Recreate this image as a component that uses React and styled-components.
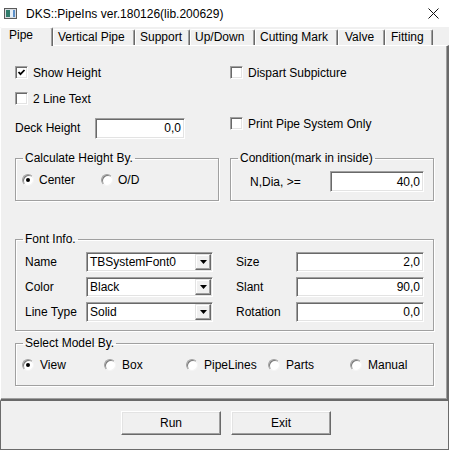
import React from 'react';
import styled, { createGlobalStyle } from 'styled-components';

const GlobalStyle = createGlobalStyle`
  html, body { margin: 0; padding: 0; background: #f0f0f0; }
  body {
    width: 449px; height: 450px; overflow: hidden;
    font-family: "Liberation Sans", Arial, sans-serif; font-size: 12px; color: #000;
  }
  * { box-sizing: border-box; }
`;

const Window = styled.div`
  width: 449px; height: 450px;
  display: flex; flex-direction: column;
  background: #f0f0f0;
`;

const TitleBar = styled.div`
  flex: none; height: 27px; background: #fff;
  display: flex; align-items: center; padding-left: 4px;
`;

const TitleText = styled.span`
  flex: 1; margin-left: 9px; font-size: 12px; line-height: 14px; color: #000;
`;

const CloseBox = styled.div`
  width: 32px; height: 27px; display: flex; align-items: center; justify-content: center;
`;

const TabStrip = styled.div`
  flex: none; height: 19px; display: flex; align-items: flex-end;
  position: relative; z-index: 1; margin-bottom: -1px;
`;

const Tab = styled.div`
  width: ${p => p.$w}px;
  height: ${p => (p.$active ? 19 : 16)}px;
  margin-bottom: ${p => (p.$active ? 0 : 1)}px;
  padding-left: ${p => p.$pad}px;
  background: #f0f0f0;
  border-top: 1px solid #fff;
  border-left: 1px solid #fff;
  border-right: 1px solid #696969;
  box-shadow: inset -1px 0 0 #a0a0a0;
  border-radius: 2px 2px 0 0;
  line-height: 14px; white-space: nowrap; font-size: 12px;
`;

const Panel = styled.div`
  flex: none; height: 356px;
  border-top: 1px solid #fff;
  border-left: 1px solid #fff;
  border-right: 2px solid #696969;
  border-bottom: 2px solid #696969;
  box-shadow: inset -1px -1px 0 #a0a0a0;
  padding: 20px 13px 0 14px;
  display: flex; flex-direction: column;
`;

const TopGrid = styled.div`
  display: grid;
  grid-template-columns: 204px 204px;
  grid-template-rows: 14px 13px 22px;
  column-gap: 11px; row-gap: 12px;
`;

const CheckRow = styled.label`
  display: flex; align-items: center; gap: 5px; height: 13px; line-height: 14px;
  align-self: start; white-space: nowrap;
  grid-column: ${p => p.$col || 'auto'};
  grid-row: ${p => p.$row || 'auto'};
`;

const CheckBox = styled.span`
  width: 13px; height: 13px; flex: none; background: #fff;
  border: 1px solid; border-color: #a0a0a0 #fff #fff #a0a0a0;
  box-shadow: inset 1px 1px 0 #696969, inset -1px -1px 0 #e3e3e3;
  display: flex; align-items: center; justify-content: center;
`;

const FieldRow = styled.div`
  display: flex; align-items: center;
  grid-column: ${p => p.$col || 'auto'};
  grid-row: ${p => p.$row || 'auto'};
`;

const Label = styled.span`
  width: ${p => p.$w}px; flex: none; white-space: nowrap; line-height: 14px;
`;

const TextBox = styled.div`
  width: ${p => p.$w}px; height: ${p => p.$h || 20}px; flex: none;
  background: #fff;
  border: 1px solid; border-color: #a0a0a0 #fff #fff #a0a0a0;
  box-shadow: inset 1px 1px 0 #696969, inset -1px -1px 0 #e3e3e3;
  display: flex; align-items: center; justify-content: flex-end;
  padding-right: 3px; line-height: 14px;
`;

const GroupRow = styled.div`
  display: grid; grid-template-columns: 204px 204px; column-gap: 11px;
  align-items: start; margin-top: 12px;
`;

const Group = styled.fieldset`
  margin: ${p => p.$mt || 0}px 0 0 0;
  padding: 0;
  border: 1px solid #a0a0a0;
  box-shadow: inset 1px 1px 0 #fff, 1px 1px 0 #fff;
  min-width: 0;
`;

const Legend = styled.legend`
  padding: 0 2px; margin-left: 7px; line-height: 14px; font-size: 12px;
`;

const GroupBody = styled.div`
  padding: ${p => p.$pad};
`;

const RadioRow = styled.div`
  display: flex; align-items: center; height: 14px;
`;

const RadioItem = styled.label`
  width: ${p => p.$w}px; flex: none;
  display: flex; align-items: center; gap: ${p => p.$gap || 6}px;
  white-space: nowrap; line-height: 14px;
`;

const RadioCircle = styled.span`
  width: 12px; height: 12px; flex: none; border-radius: 50%;
  background: #fff;
  border: 1px solid; border-color: #a0a0a0 #f4f4f4 #f4f4f4 #a0a0a0;
  box-shadow: inset 1px 1px 0 #7a7a7a;
  display: flex; align-items: center; justify-content: center;
  &::after {
    content: ''; width: 4px; height: 4px; border-radius: 50%;
    background: ${p => (p.$on ? '#000' : 'transparent')};
  }
`;

const FontGrid = styled.div`
  display: flex; gap: 23px;
`;

const FieldGrid = styled.div`
  display: grid;
  grid-template-columns: ${p => p.$label}px ${p => p.$field}px;
  grid-auto-rows: 20px; row-gap: 5px; align-items: center;
`;

const Select = styled.div`
  width: 127px; height: 20px;
  background: #fff;
  border: 1px solid; border-color: #a0a0a0 #fff #fff #a0a0a0;
  box-shadow: inset 1px 1px 0 #696969, inset -1px -1px 0 #e3e3e3;
  display: flex; align-items: center; padding: 1px 1px 1px 3px;
`;

const SelectText = styled.span`
  flex: 1; line-height: 14px; white-space: nowrap;
`;

const DropButton = styled.span`
  width: 16px; height: 16px; flex: none;
  background: #f0f0f0;
  border: 1px solid; border-color: #e3e3e3 #696969 #696969 #e3e3e3;
  box-shadow: inset -1px -1px 0 #a0a0a0, inset 1px 1px 0 #fff;
  display: flex; align-items: center; justify-content: center;
`;

const Footer = styled.div`
  flex: 1;
  border: 1px solid #6b6b6b; border-top: none;
  display: flex; justify-content: center; align-items: flex-start;
  padding: 10px 0 0 3px; gap: 10px;
`;

const Button = styled.button`
  width: 100px; height: 24px;
  font-family: "Liberation Sans", Arial, sans-serif; font-size: 12px; color: #000;
  background: #f0f0f0;
  border: 1px solid; border-color: #fff #696969 #696969 #fff;
  box-shadow: inset -1px -1px 0 #a0a0a0, inset 1px 1px 0 #e3e3e3;
  padding: 0; line-height: 14px;
`;

const AppIcon = () => (
  <svg width="13" height="11" viewBox="0 0 13 11">
    <rect x="0.5" y="0.5" width="12" height="10" fill="#d8dce0" stroke="#5a5a5a" />
    <rect x="2" y="2" width="4" height="7" fill="#2f7a6a" />
    <rect x="6" y="2" width="5" height="7" fill="#e6eef6" />
    <rect x="9" y="2" width="2" height="7" fill="#5b8fc8" />
  </svg>
);

const CloseIcon = () => (
  <svg width="11" height="11" viewBox="0 0 11 11">
    <path d="M0.5 0.5 L10.5 10.5 M10.5 0.5 L0.5 10.5" stroke="#111" strokeWidth="1" />
  </svg>
);

const Check = () => (
  <svg width="9" height="9" viewBox="0 0 9 9">
    <polyline points="1.5,4 3.5,6.2 7.5,2" fill="none" stroke="#000" strokeWidth="1.8" />
  </svg>
);

const Arrow = () => (
  <svg width="7" height="4" viewBox="0 0 7 4">
    <polygon points="0,0 7,0 3.5,4" fill="#000" />
  </svg>
);

const tabs = [
  { t: 'Pipe', w: 53, pad: 8, active: true },
  { t: 'Vertical Pipe', w: 82, pad: 4 },
  { t: 'Support', w: 55, pad: 4 },
  { t: 'Up/Down', w: 65, pad: 4 },
  { t: 'Cutting Mark', w: 83, pad: 4 },
  { t: 'Valve', w: 47, pad: 6 },
  { t: 'Fitting', w: 48, pad: 5 },
];

const Radio = ({ w, gap, on, children }) => (
  <RadioItem $w={w} $gap={gap}>
    <RadioCircle $on={on} />
    {children}
  </RadioItem>
);

const SelectBox = ({ children }) => (
  <Select>
    <SelectText>{children}</SelectText>
    <DropButton><Arrow /></DropButton>
  </Select>
);

export default function App() {
  return (
    <Window>
      <GlobalStyle />
      <TitleBar>
        <AppIcon />
        <TitleText>DKS::PipeIns ver.180126(lib.200629)</TitleText>
        <CloseBox><CloseIcon /></CloseBox>
      </TitleBar>
      <TabStrip>
        {tabs.map(tb => (
          <Tab key={tb.t} $w={tb.w} $pad={tb.pad} $active={tb.active}>{tb.t}</Tab>
        ))}
      </TabStrip>
      <Panel>
        <TopGrid>
          <CheckRow $col="1" $row="1"><CheckBox><Check /></CheckBox>Show Height</CheckRow>
          <CheckRow $col="2" $row="1"><CheckBox />Dispart Subpicture</CheckRow>
          <CheckRow $col="1" $row="2"><CheckBox />2 Line Text</CheckRow>
          <FieldRow $col="1" $row="3">
            <Label $w={80}>Deck Height</Label>
            <TextBox $w={90} $h={21}>0,0</TextBox>
          </FieldRow>
          <CheckRow $col="2" $row="3"><CheckBox />Print Pipe System Only</CheckRow>
        </TopGrid>
        <GroupRow>
          <Group>
            <Legend>Calculate Height By.</Legend>
            <GroupBody $pad="8px 0 13px 6px">
              <RadioRow>
                <Radio w={79} gap={5} on>Center</Radio>
                <Radio w={80} gap={5}>O/D</Radio>
              </RadioRow>
            </GroupBody>
          </Group>
          <Group>
            <Legend>Condition(mark in inside)</Legend>
            <GroupBody $pad="6px 0 8px 19px">
              <FieldRow>
                <Label $w={80}>N,Dia, &gt;=</Label>
                <TextBox $w={94} $h={21}>40,0</TextBox>
              </FieldRow>
            </GroupBody>
          </Group>
        </GroupRow>
        <Group $mt={31}>
          <Legend>Font Info.</Legend>
          <GroupBody $pad="6px 0 8px 9px">
            <FontGrid>
              <FieldGrid $label={61} $field={127}>
                <Label>Name</Label>
                <SelectBox>TBSystemFont0</SelectBox>
                <Label>Color</Label>
                <SelectBox>Black</SelectBox>
                <Label>Line Type</Label>
                <SelectBox>Solid</SelectBox>
              </FieldGrid>
              <FieldGrid $label={60} $field={128}>
                <Label>Size</Label>
                <TextBox $w={128}>2,0</TextBox>
                <Label>Slant</Label>
                <TextBox $w={128}>90,0</TextBox>
                <Label>Rotation</Label>
                <TextBox $w={128}>0,0</TextBox>
              </FieldGrid>
            </FontGrid>
          </GroupBody>
        </Group>
        <Group $mt={5}>
          <Legend>Select Model By.</Legend>
          <GroupBody $pad="8px 0 13px 6px">
            <RadioRow>
              <Radio w={82} on>View</Radio>
              <Radio w={82}>Box</Radio>
              <Radio w={82}>PipeLines</Radio>
              <Radio w={82}>Parts</Radio>
              <Radio w={82}>Manual</Radio>
            </RadioRow>
          </GroupBody>
        </Group>
      </Panel>
      <Footer>
        <Button>Run</Button>
        <Button>Exit</Button>
      </Footer>
    </Window>
  );
}
